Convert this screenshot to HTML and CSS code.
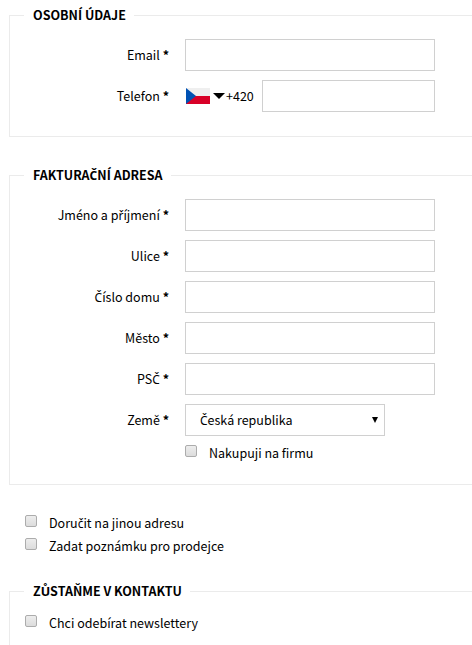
FILE: index.html
```html
<!DOCTYPE html>
<html lang="cs">
<head>
<meta charset="utf-8">
<title>Objednávka</title>
<link rel="stylesheet" href="styles.css">
</head>
<body>
<form class="order">
  <fieldset class="group group-personal">
    <legend class="title">OSOBNÍ ÚDAJE</legend>
    <div class="row"><label class="label" for="email">Email <b>*</b></label><input class="field" id="email" type="text"></div>
    <div class="row"><label class="label" for="phone">Telefon <b>*</b></label>
      <div class="phone">
        <svg class="flag" width="24" height="16" viewBox="0 0 24 16"><path fill="#efefef" d="M0 0h24v8H0z"/><path fill="#d80027" d="M0 8h24v8H0z"/><path fill="#0052b4" d="M0 0l10 8-10 8z"/></svg>
        <svg class="caret" width="12" height="6" viewBox="0 0 12 6"><path d="M0 0h12L6 6z"/></svg>
        <span class="prefix">+420</span>
        <input class="field field-phone" id="phone" type="text">
      </div>
    </div>
  </fieldset>
  <fieldset class="group group-billing">
    <legend class="title">FAKTURA<span class="caron">Č</span>NÍ ADRESA</legend>
    <div class="row"><label class="label" for="name">Jméno a p<span class="caron">ř</span>íjmení <b>*</b></label><input class="field" id="name" type="text"></div>
    <div class="row"><label class="label" for="street">Ulice <b>*</b></label><input class="field" id="street" type="text"></div>
    <div class="row"><label class="label" for="house"><span class="caron">Č</span>íslo domu <b>*</b></label><input class="field" id="house" type="text"></div>
    <div class="row"><label class="label" for="city">Město <b>*</b></label><input class="field" id="city" type="text"></div>
    <div class="row"><label class="label" for="zip">PS<span class="caron">Č</span> <b>*</b></label><input class="field" id="zip" type="text"></div>
    <div class="row"><span class="label">Země <b>*</b></span>
      <div class="select"><span><span class="caron">Č</span>eská republika</span><svg width="6" height="6" viewBox="0 0 6 6"><path d="M0 0h6L3 6z"/></svg></div>
    </div>
    <label class="check check-company"><input type="checkbox" class="box"><span class="text">Nakupuji na firmu</span></label>
  </fieldset>
  <div class="extras">
    <label class="check"><input type="checkbox" class="box"><span class="text">Doru<span class="caron">č</span>it na jinou adresu</span></label>
    <label class="check"><input type="checkbox" class="box"><span class="text">Zadat poznámku pro prodejce</span></label>
  </div>
  <fieldset class="group group-contact">
    <legend class="title">ZŮSTAŇME V KONTAKTU</legend>
    <label class="check"><input type="checkbox" class="box"><span class="text">Chci odebírat newslettery</span></label>
  </fieldset>
</form>
</body>
</html>
```
FILE: styles.css
```css
* { box-sizing: border-box; }
body {
  margin: 0;
  background: #fff;
  color: #000;
  font: 12.5px/20px "Noto Sans CJK SC", "Noto Sans", sans-serif;
}
.order { padding: 5px 0 0 9px; }
.group {
  min-width: 0;
  margin: 0;
  padding: 0 0 0 14px;
  border: 1px solid #ebebeb;
  border-right: 0;
}
.group-personal { height: 132px; }
.group-billing { height: 320px; margin-top: 28px; }
.group-contact { height: 64px; border-bottom: 0; }
.title {
  height: 21px;
  padding: 0 8px 0 9px;
  font-weight: 700;
  line-height: 19px;
  white-space: nowrap;
}
.caron { font-family: "Noto Sans", sans-serif; font-size: 12px; line-height: 1; }
.row { display: flex; align-items: center; height: 32px; margin-bottom: 9px; }
.title + .row { margin-top: 13px; }
.label { width: 145px; margin-right: 16px; text-align: right; white-space: nowrap; }
.field {
  width: 250px;
  height: 32px;
  margin: 0;
  padding: 0 14px;
  border: 1px solid #d0d0d0;
  background: #fff;
  font: inherit;
  outline: 0;
}
.phone { display: flex; align-items: center; width: 250px; padding-left: 1px; }
.caret { margin: 0 1px 0 3px; }
.prefix { width: 36px; }
.field-phone { width: 173px; }
.select {
  display: flex;
  align-items: center;
  justify-content: space-between;
  width: 200px;
  height: 32px;
  padding: 0 6px 0 14px;
  border: 1px solid #d0d0d0;
}
.check { display: flex; height: 23px; white-space: nowrap; }
.box {
  appearance: none;
  flex: none;
  width: 12px;
  height: 12px;
  margin: 4px 12px 0 0;
  border: 1px solid #acacac;
  border-radius: 2px;
  background: linear-gradient(#ededed, #dcdcdc);
}
.text { margin-top: 2px; }
.check-company { margin: -4px 0 0 161px; }
.extras { padding: 26px 0 0 16px; height: 96px; }
.group-contact .check { margin: 9px 0 0 1px; }
```
